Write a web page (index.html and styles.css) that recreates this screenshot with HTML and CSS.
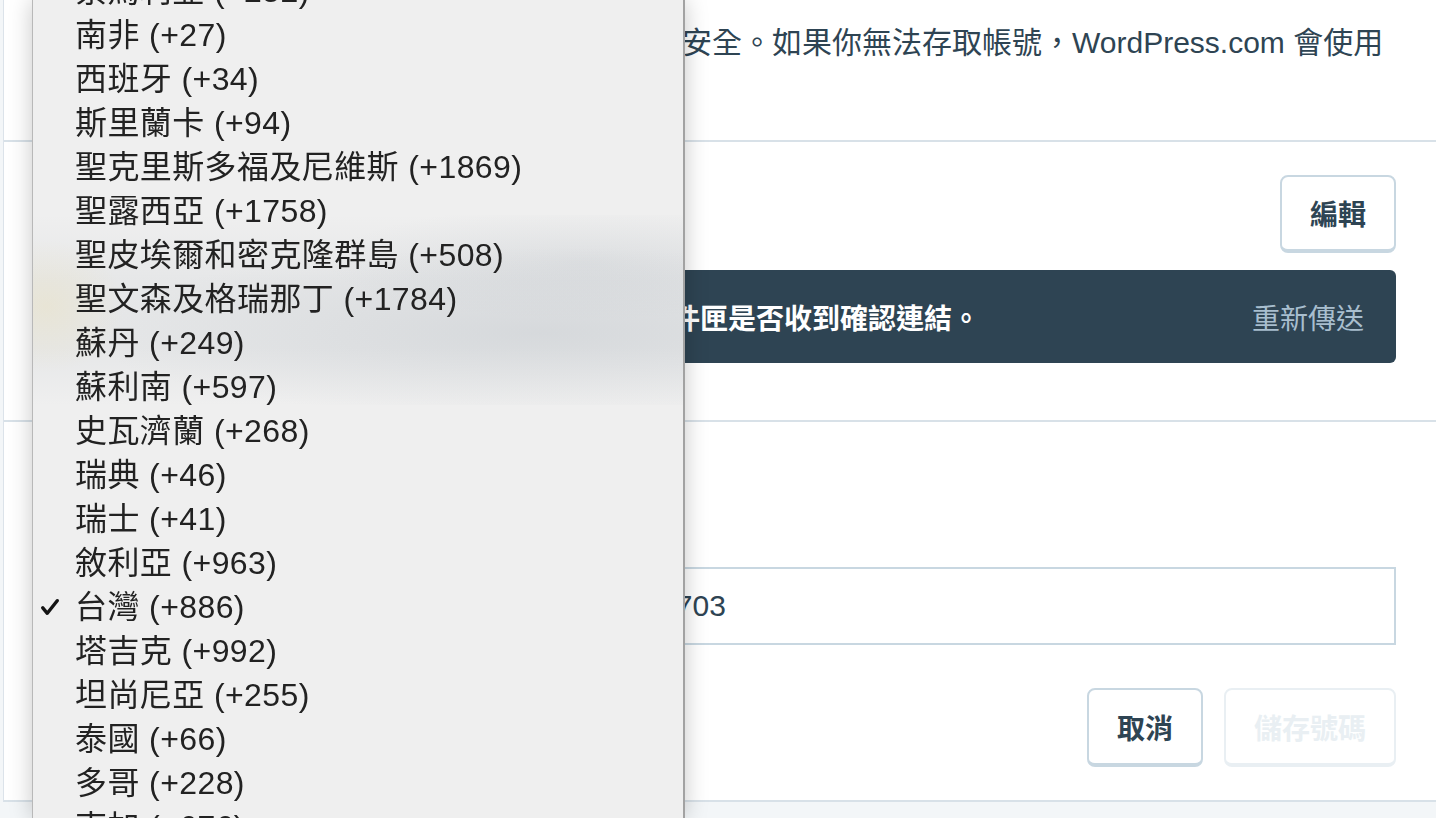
FILE: index.html
```html
<!DOCTYPE html>
<html lang="zh-Hant">
<head>
<meta charset="utf-8">
<title>兩步驟驗證</title>
<link rel="stylesheet" href="styles.css">
</head>
<body>
<main class="card">
  <section class="sec sec-intro">
    <p class="intro">
      <span class="intro-line">兩步驟驗證會在登入時要求輸入驗證碼，讓帳號安全。如果你無法存取帳號，WordPress.com 會使用</span>
      <span class="intro-line">簡訊傳送驗證碼給你。</span>
    </p>
  </section>
  <section class="sec sec-email">
    <div class="email-row">
      <div class="email-info">
        <div class="label">電子郵件地址</div>
      </div>
      <button class="btn">編輯</button>
    </div>
    <div class="notice">
      <span class="notice-icon"></span>
      <span class="notice-text">我們已寄出確認郵件，請檢查你的電子郵件收件匣是否收到確認連結。</span>
      <a class="notice-action">重新傳送</a>
    </div>
  </section>
  <section class="sec sec-phone">
    <div class="label">電話號碼</div>
    <div class="desc">輸入手機號碼</div>
    <div class="phone-row">
      <div class="country">台灣 (+886)</div>
      <div class="phone-input">0912345703</div>
    </div>
    <div class="actions">
      <button class="btn">取消</button>
      <button class="btn btn-disabled">儲存號碼</button>
    </div>
  </section>
</main>

<div class="menu">
  <ul class="menu-list">
    <li class="menu-item">索馬利亞 (+252)</li>
    <li class="menu-item">南非 (+27)</li>
    <li class="menu-item">西班牙 (+34)</li>
    <li class="menu-item">斯里蘭卡 (+94)</li>
    <li class="menu-item">聖克里斯多福及尼維斯 (+1869)</li>
    <li class="menu-item">聖露西亞 (+1758)</li>
    <li class="menu-item">聖皮埃爾和密克隆群島 (+508)</li>
    <li class="menu-item">聖文森及格瑞那丁 (+1784)</li>
    <li class="menu-item">蘇丹 (+249)</li>
    <li class="menu-item">蘇利南 (+597)</li>
    <li class="menu-item">史瓦濟蘭 (+268)</li>
    <li class="menu-item">瑞典 (+46)</li>
    <li class="menu-item">瑞士 (+41)</li>
    <li class="menu-item">敘利亞 (+963)</li>
    <li class="menu-item is-selected"><svg class="check" viewBox="0 0 16 16"><path d="M1.6 8.8 L5.6 13.6 L14.4 2.4" fill="none" stroke="#141414" stroke-width="3" stroke-linecap="round" stroke-linejoin="round"/></svg>台灣 (+886)</li>
    <li class="menu-item">塔吉克 (+992)</li>
    <li class="menu-item">坦尚尼亞 (+255)</li>
    <li class="menu-item">泰國 (+66)</li>
    <li class="menu-item">多哥 (+228)</li>
    <li class="menu-item">東加 (+676)</li>
  </ul>
</div>
</body>
</html>
```
FILE: styles.css
```css
html, body {
  margin: 0;
  height: 100%;
  overflow: hidden;
}

body {
  background: #f3f6f8;
  font-family: "Liberation Sans", "Noto Sans CJK TC", sans-serif;
  color: #2e4453;
}

.card {
  margin-left: 3px;
  width: 1437px;
  box-sizing: border-box;
  background: #fff;
  border-left: 1px solid #dce3ea;
  border-bottom: 2px solid #d8e1e8;
}

.sec {
  padding: 0 44px 0 48px;
  border-bottom: 2px solid #d8e1e8;
}

.sec:last-child {
  border-bottom: none;
}

/* section 1 */
.sec-intro {
  padding-top: 21px;
  padding-bottom: 31px;
}

.intro {
  margin: 0;
  font-size: 30px;
  line-height: 44px;
}

.intro-line {
  display: block;
  white-space: nowrap;
}

/* section 2 */
.sec-email {
  padding-top: 33px;
  padding-bottom: 57px;
}

.email-row {
  display: flex;
  align-items: center;
  justify-content: space-between;
}

.label {
  font-size: 30px;
  font-weight: 700;
  line-height: 44px;
}

.desc {
  font-size: 28px;
  line-height: 44px;
  color: #87a6bc;
}

.btn {
  font-family: inherit;
  font-size: 28px;
  font-weight: 700;
  color: #2e4453;
  background: #fff;
  border: 2px solid #c8d7e1;
  border-bottom-width: 4px;
  border-radius: 8px;
  height: 78px;
  padding: 0 28px;
  box-sizing: border-box;
}

.btn-disabled {
  color: #e9eff3;
  border-color: #e9eff3;
}

.notice {
  margin-top: 17px;
  height: 93px;
  box-sizing: border-box;
  display: flex;
  align-items: center;
  gap: 12px;
  padding: 0 32px 0 24px;
  background: #2e4453;
  border-radius: 6px;
  color: #fff;
  font-size: 28px;
}

.notice-icon {
  width: 24px;
  height: 24px;
  border-radius: 50%;
  background: #87a6bc;
  flex: none;
}

.notice-text {
  font-weight: 700;
  white-space: nowrap;
}

.notice-action {
  margin-left: auto;
  color: #a8bece;
  white-space: nowrap;
}

/* section 3 */
.sec-phone {
  padding-top: 33px;
  padding-bottom: 33px;
}

.phone-row {
  margin-top: 24px;
  display: grid;
  grid-template-columns: 469px 1fr;
  gap: 20px;
}

.country,
.phone-input {
  height: 78px;
  box-sizing: border-box;
  border: 2px solid #c8d7e1;
  display: flex;
  align-items: center;
  padding: 0 16px;
  font-size: 30px;
}

.actions {
  margin-top: 43px;
  display: flex;
  justify-content: flex-end;
  gap: 21px;
}

.actions .btn {
  height: 79px;
}

/* native select popup */
.menu {
  position: fixed;
  left: 32px;
  top: 0;
  bottom: 0;
  width: 653px;
  box-sizing: border-box;
  background: #efefef;
  border-left: 1px solid #b8b8b8;
  border-right: 2px solid #a2a2a2;
  box-shadow: 0 0 22px rgba(0, 0, 0, 0.22);
  overflow: hidden;
}

.menu::before {
  content: "";
  position: absolute;
  left: 0;
  right: 0;
  top: 215px;
  height: 190px;
  background:
    radial-gradient(ellipse 70% 45% at 78% 62%, rgba(150, 160, 170, 0.2), rgba(150, 160, 170, 0) 100%),
    radial-gradient(ellipse 40% 30% at 85% 25%, rgba(150, 160, 170, 0.14), rgba(150, 160, 170, 0) 100%),
    radial-gradient(ellipse 12% 35% at 2% 48%, rgba(236, 222, 170, 0.3), rgba(236, 222, 170, 0) 100%),
    linear-gradient(to bottom, rgba(175, 183, 190, 0), rgba(175, 183, 190, 0.14) 35%, rgba(175, 183, 190, 0.14) 70%, rgba(175, 183, 190, 0));
}

.menu-list {
  position: relative;
  list-style: none;
  margin: -31px 0 0;
  padding: 0;
}

.menu-item {
  position: relative;
  height: 44px;
  line-height: 44px;
  padding-left: 42px;
  font-size: 32px;
  letter-spacing: 0.4px;
  color: #222;
  white-space: nowrap;
}

.check {
  position: absolute;
  left: 8px;
  top: 13px;
  width: 18px;
  height: 18px;
}
```
